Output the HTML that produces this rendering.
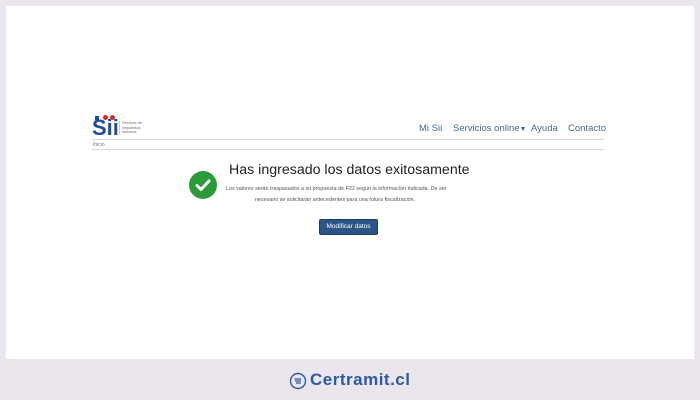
<!DOCTYPE html>
<html><head><meta charset="utf-8"><style>
*{margin:0;padding:0;box-sizing:border-box}
body{width:700px;height:400px;background:#ebe6ee;position:relative;overflow:hidden;font-family:"Liberation Sans","DejaVu Sans",sans-serif}
.panel{position:absolute;left:6px;top:6px;width:688px;height:353px;background:#fff}
.abs{position:absolute;white-space:nowrap}
.nav{top:123px;font-size:9.5px;color:#4a6a88}
.line{left:92px;width:512px;height:1px;background:#d8d8d8}
</style></head><body>
<div class="panel"></div>
<div class="abs" style="left:95px;top:116px;width:4px;height:4px;background:#1f4f9c"></div>
<div class="abs" style="left:103px;top:115px;width:5px;height:5px;border-radius:50%;background:#d42a2a"></div>
<div class="abs" style="left:110px;top:115px;width:5px;height:5px;border-radius:50%;background:#d42a2a"></div>
<div class="abs" style="left:92px;top:117px;font-size:22px;font-weight:bold;color:#1f4f9c;line-height:22px">Sii</div>
<div class="abs" style="left:119px;top:121px;font-size:4px;line-height:4.5px;color:#666;border-left:1px solid #ccc;padding-left:2px">Servicio de<br>Impuestos<br>Internos</div>
<div class="abs nav" style="left:419px">Mi Sii</div>
<div class="abs nav" style="left:453px">Servicios online<span style="font-size:7px">▼</span></div>
<div class="abs nav" style="left:531px">Ayuda</div>
<div class="abs nav" style="left:568px">Contacto</div>
<div class="abs line" style="top:139px"></div>
<div class="abs" style="left:93px;top:142px;font-size:5px;color:#777">Inicio</div>
<div class="abs line" style="top:149px"></div>
<div class="abs" style="left:189px;top:171px;width:28px;height:28px;border-radius:50%;background:#2a9a3a"></div>
<svg class="abs" style="left:189px;top:171px" width="28" height="28"><path d="M8 14.5l4 4 8-8.5" stroke="#fff" stroke-width="3" fill="none" stroke-linecap="round" stroke-linejoin="round"/></svg>
<div class="abs" style="left:229px;top:162px;font-size:14.2px;color:#222">Has ingresado los datos exitosamente</div>
<div class="abs" style="left:226px;top:184px;width:218px;font-size:5.4px;line-height:11px;color:#555;text-align:center">Los valores serán traspasados a su propuesta de F22 según la información indicada. De ser<br>necesario se solicitarán antecedentes para una futura fiscalización.</div>
<div class="abs" style="left:319px;top:219px;width:59px;height:16px;background:#2a5585;border:1px solid #1b3d66;border-radius:2px;color:#fff;font-size:6.5px;line-height:14px;text-align:center">Modificar datos</div>
<svg class="abs" style="left:289px;top:372px" width="18" height="18"><circle cx="9" cy="9" r="7.5" stroke="#2d5aa0" stroke-width="1.4" fill="none"/><path d="M5.5 7h6.5M6 9h6M7 11h5" stroke="#2d5aa0" stroke-width="1.3"/></svg>
<div class="abs" style="left:310px;top:370px;font-size:17px;font-weight:bold;color:#2d5aa0;letter-spacing:0.5px">Certramit.cl</div>
</body></html>
